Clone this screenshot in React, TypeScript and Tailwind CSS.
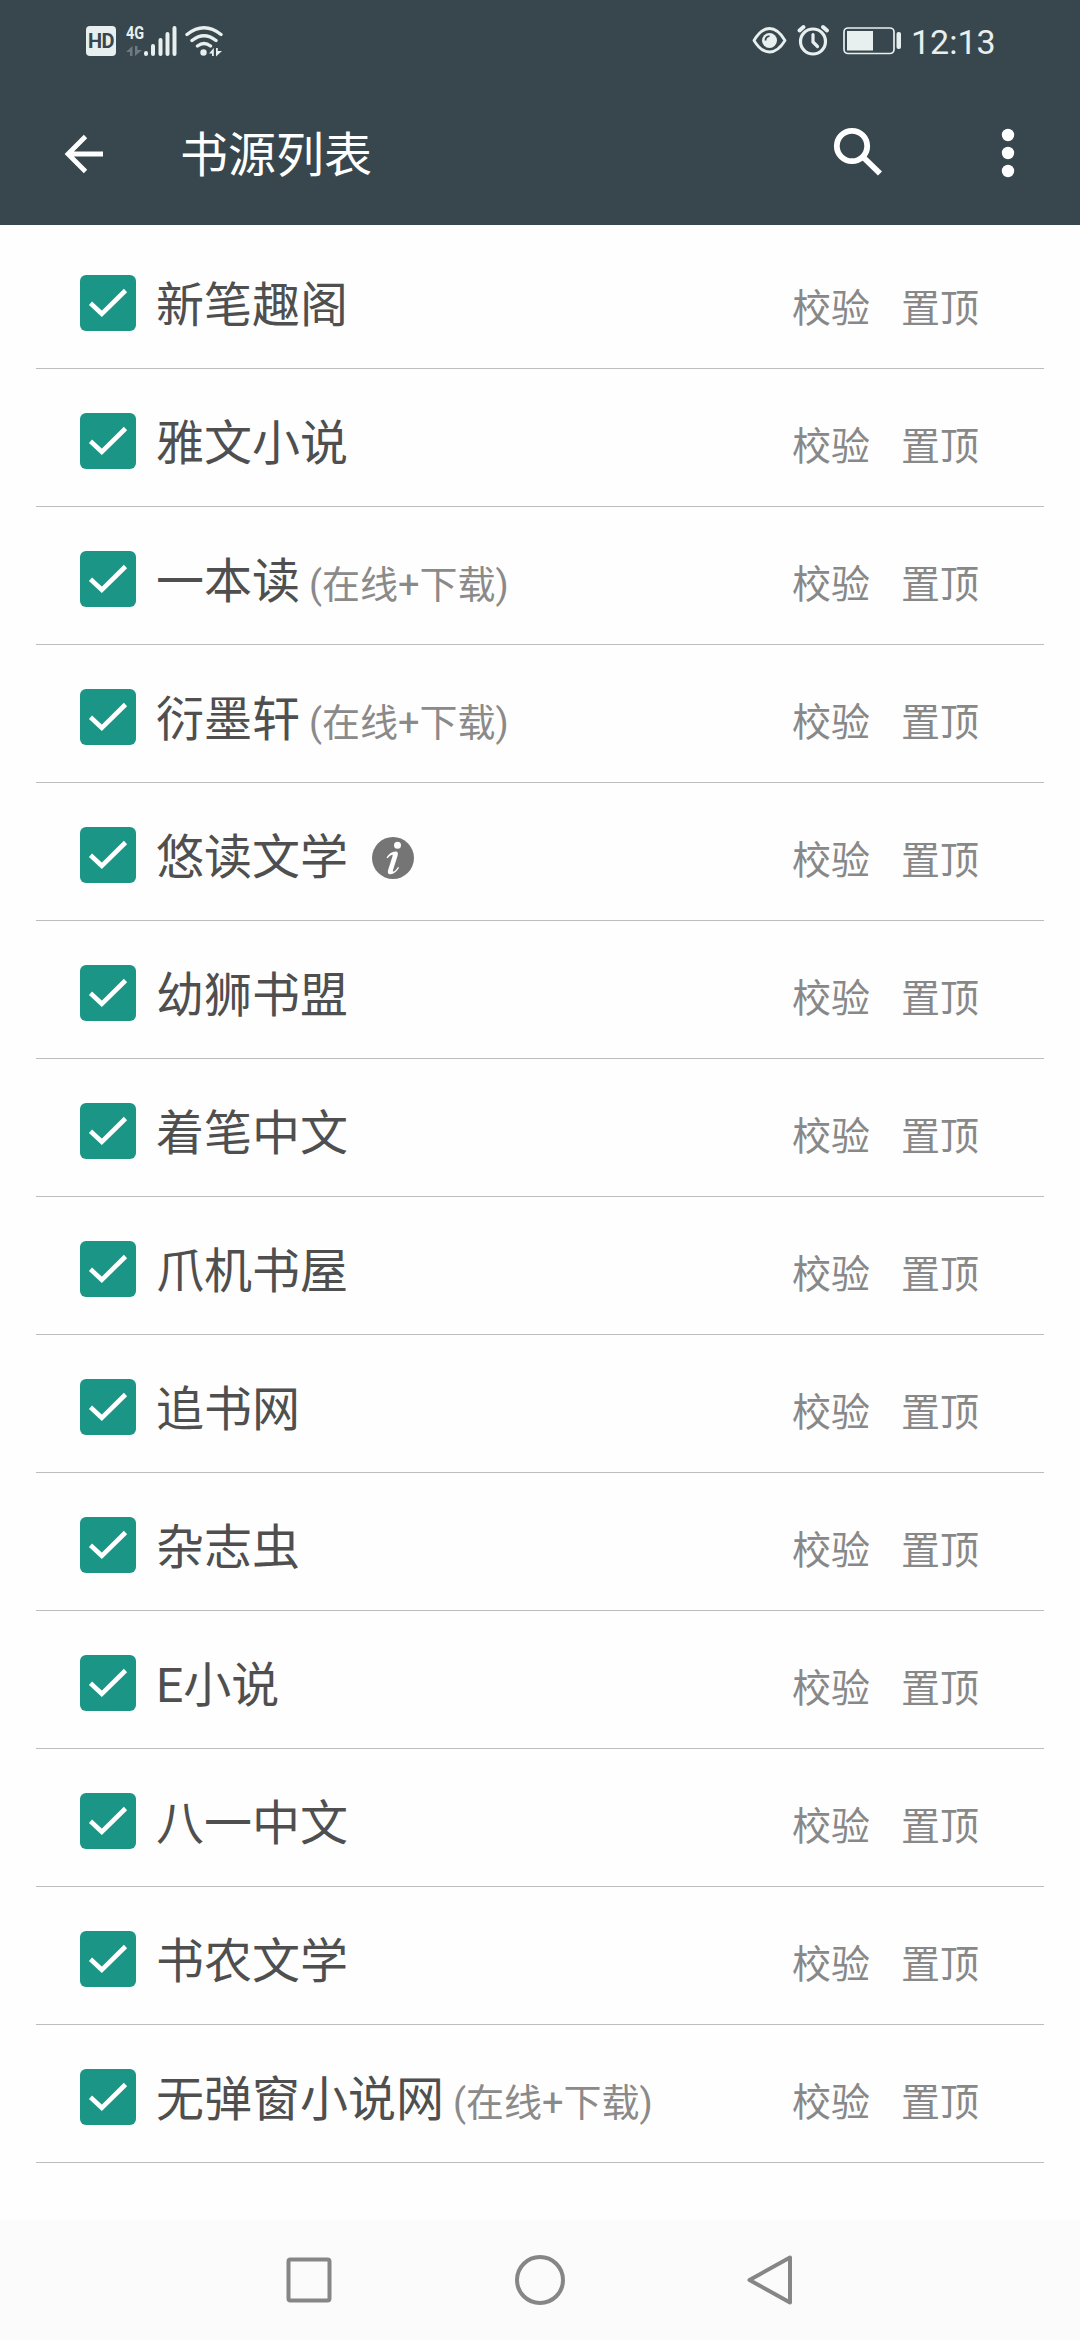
type Source = { name: string; download?: boolean; info?: boolean };

const sources: Source[] = [
  { name: '新笔趣阁' },
  { name: '雅文小说' },
  { name: '一本读', download: true },
  { name: '衍墨轩', download: true },
  { name: '悠读文学', info: true },
  { name: '幼狮书盟' },
  { name: '着笔中文' },
  { name: '爪机书屋' },
  { name: '追书网' },
  { name: '杂志虫' },
  { name: 'E小说' },
  { name: '八一中文' },
  { name: '书农文学' },
  { name: '无弹窗小说网', download: true },
];

function SignalIcon() {
  return (
    <svg className="h-[32px] w-[34px]" viewBox="143 24 34 32" stroke="#e8efef" strokeWidth="4" strokeLinecap="round">
      <path d="M146 52v1M153 45v8M160.500 39v14M167.500 33v20M174.500 27v26" />
    </svg>
  );
}

function WifiIcon() {
  return (
    <svg className="h-[32px] w-[40px]" viewBox="184 24 40 32" fill="none" stroke="#e8efef" strokeWidth="3.400" strokeLinecap="round">
      <path d="M187 33.500Q204 20 221 33.500M192 39.500Q204 30 216 39.500M197.500 45Q204 40 210.500 45" />
      <circle cx="203.500" cy="51.500" r="3.200" fill="#e8efef" stroke="none" />
      <path d="M209 52.500L213.800 47v8h-1.800v-2.500zM216 47h1.800v3H222L216 55.500z" fill="#e8efef" stroke="none" />
    </svg>
  );
}

function StatusBar() {
  return (
    <div className="flex h-[81px] items-center justify-between pr-[86px] pl-[86px]">
      <div className="flex items-center">
        <div className="flex h-[30px] w-[30px] items-center justify-center rounded-[4px] bg-[#e8efef] text-[20px] leading-none font-bold tracking-[-0.5px] text-[#38474d]">
          HD
        </div>
        <div className="ml-[10px] flex h-[32px] w-[17px] flex-col justify-between">
          <span className="origin-left scale-x-[0.76] text-[19px] leading-[16px] font-bold text-[#e8efef]">4G</span>
          <svg className="h-[12px] w-[16px]" viewBox="0 0 16 12" fill="#6d7a7f">
            <path d="M0 7L6.500 1v10H4V7zM9 1h2.500v4H16L9 11z" />
          </svg>
        </div>
        <SignalIcon />
        <div className="ml-[7px] flex">
          <WifiIcon />
        </div>
      </div>
      <div className="flex items-center">
        <svg className="h-[34px] w-[36px]" viewBox="752 24 36 34" fill="none" stroke="#e8efef" strokeWidth="2.800" strokeLinejoin="round">
          <path d="M754 40.500Q761 28.500 769.500 28.500Q778 28.500 785 40.500Q778 52 769.500 52Q761 52 754 40.500Z" />
          <circle cx="769.500" cy="40.500" r="7.500" fill="#e8efef" stroke="none" />
          <path d="M765.500 40.500q0-4 4-4.300" stroke="#38474d" strokeWidth="1.800" />
        </svg>
        <svg className="ml-[8px] h-[34px] w-[36px]" viewBox="796 24 36 34" fill="none" stroke="#e8efef" strokeWidth="3.200" strokeLinecap="round">
          <circle cx="813" cy="41.500" r="12.500" />
          <path d="M799.500 30.500l4-3.500M823 27l4 3.500" strokeWidth="4" />
          <path d="M813 34.500v7.500l4.500 4.500" />
        </svg>
        <svg className="ml-[10px] h-[34px] w-[62px]" viewBox="842 24 62 34">
          <rect x="844" y="28" width="50" height="25.500" rx="4" fill="none" stroke="#e8efef" strokeWidth="1.700" />
          <rect x="847" y="31" width="26" height="19.500" fill="#e8efef" />
          <rect x="896.500" y="32" width="4.500" height="17" rx="2" fill="#e8efef" />
        </svg>
        <span className="ml-[7px] w-[83px] pt-[2px] text-[34px] leading-[40px] whitespace-nowrap text-[#e8efef]">12:13</span>
      </div>
    </div>
  );
}

function AppBar() {
  return (
    <div className="flex h-[144px] items-center text-white">
      <svg className="ml-[60px] h-[48px] w-[48px]" viewBox="60 129 48 48" fill="none" stroke="white" strokeWidth="4.800">
        <path d="M103 154H68M85.500 136.500L68 154l17.500 17.500" />
      </svg>
      <h1 className="ml-[72px] flex-1 pt-[6px] text-[48px] leading-[60px]">书源列表</h1>
      <svg className="h-[60px] w-[60px]" viewBox="825 123 60 60" fill="none" stroke="white">
        <circle cx="851" cy="146" r="15.200" strokeWidth="5.800" />
        <path d="M862 157L879 173.500" strokeWidth="5.800" />
      </svg>
      <svg className="mr-[48px] ml-[98px] h-[60px] w-[48px]" viewBox="984 123 48 60" fill="white">
        <circle cx="1008" cy="135" r="6.200" />
        <circle cx="1008" cy="153" r="6.200" />
        <circle cx="1008" cy="171" r="6.200" />
      </svg>
    </div>
  );
}

function Checkbox() {
  return (
    <div className="h-[56px] w-[56px] rounded-[6px] bg-[#1b9686]">
      <svg className="h-[56px] w-[56px]" viewBox="0 0 56 56" fill="none" stroke="white" strokeWidth="4.600">
        <path d="M10.500 28.300L21.800 38.800L45.500 15.500" />
      </svg>
    </div>
  );
}

function InfoIcon() {
  return (
    <svg className="ml-[24px] h-[42px] w-[42px]" viewBox="0 0 42 42">
      <circle cx="21" cy="21" r="21" fill="#757575" />
      <circle cx="25.500" cy="8.300" r="3.500" fill="white" />
      <path
        d="M14.500 20.500C17 16.500 20 14.500 23.500 14.500C26 14.500 26.300 16.500 25.500 19L21 33C20.500 34.700 21.200 35 22.500 34C24 33 25 31.500 26 30L27 30.600C25 34.500 21.800 37.300 18.500 37.300C15.800 37.300 15.400 35.300 16.200 32.800L20.500 19.200C21 17.500 20.300 17.300 19 18.200C17.700 19 16.700 20 15.600 21.300Z"
        fill="white"
      />
    </svg>
  );
}

function SourceRow({ name, download, info }: Source) {
  return (
    <li className="mx-[36px] flex h-[138px] items-center border-b border-[#bdbdbd] pt-[6px] pr-[65px] pl-[44px]">
      <Checkbox />
      <div className="ml-[20px] flex flex-1 items-center pt-[6px]">
        <div className="flex h-[60px] items-baseline leading-[60px]">
          <span className="text-[48px] text-[#4f4f4f]">{name}</span>
          {download && <span className="ml-[9px] text-[38px] leading-[40px] text-[#8a8a8a]">(在线+下载)</span>}
        </div>
        {info && <InfoIcon />}
      </div>
      <div className="flex gap-[31px] pt-[12px] text-[39px] leading-[50px] text-[#888888]">
        <button>校验</button>
        <button>置顶</button>
      </div>
    </li>
  );
}

function NavigationBar() {
  return (
    <nav className="flex h-[120px] items-center justify-between bg-[#fbfbfb] px-[279px]">
      <svg className="h-[60px] w-[60px]" viewBox="0 0 60 60" fill="none" stroke="#868686" strokeWidth="4">
        <rect x="9.500" y="9.500" width="41" height="41" rx="2" />
      </svg>
      <svg className="h-[60px] w-[60px]" viewBox="0 0 60 60" fill="none" stroke="#868686" strokeWidth="4">
        <circle cx="30" cy="30" r="23" />
      </svg>
      <svg className="h-[60px] w-[60px]" viewBox="0 0 60 60" fill="none" stroke="#868686" strokeWidth="4" strokeLinejoin="round">
        <path d="M49 7.500V52.500L8.500 30Z" />
      </svg>
    </nav>
  );
}

export default function App() {
  return (
    <div className="flex h-[2340px] w-[1080px] flex-col overflow-hidden bg-[#fefefe] font-['Roboto','Noto_Sans_CJK_SC',sans-serif]">
      <header className="h-[225px] bg-[#38474d]">
        <StatusBar />
        <AppBar />
      </header>
      <ul className="flex-1 pt-[6px]">
        {sources.map((source) => (
          <SourceRow key={source.name} {...source} />
        ))}
      </ul>
      <NavigationBar />
    </div>
  );
}
